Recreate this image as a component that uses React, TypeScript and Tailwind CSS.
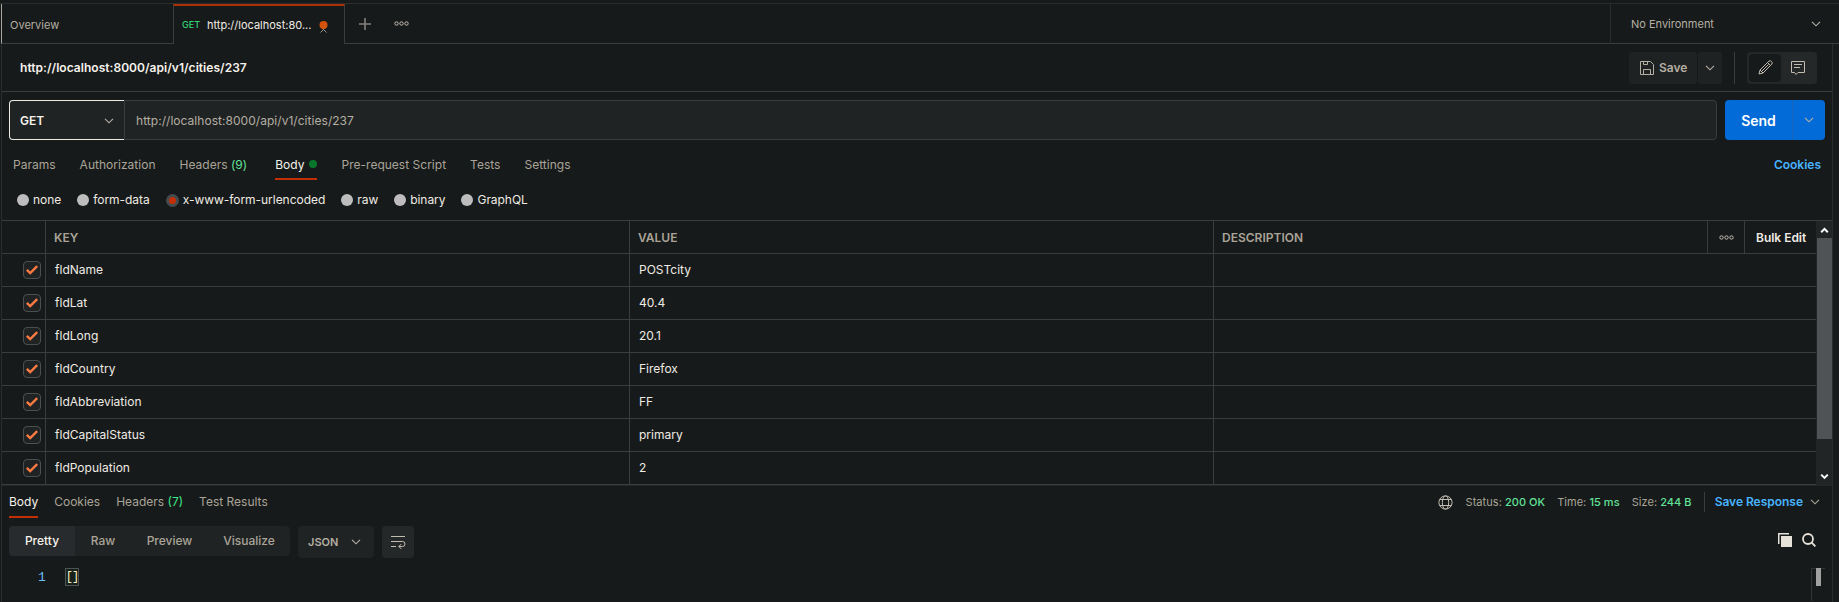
import React from "react";

const cities: [string, string][] = [
  ["fldName", "POSTcity"],
  ["fldLat", "40.4"],
  ["fldLong", "20.1"],
  ["fldCountry", "Firefox"],
  ["fldAbbreviation", "FF"],
  ["fldCapitalStatus", "primary"],
  ["fldPopulation", "2"],
];

function Chevron({ className = "" }: { className?: string }) {
  return (
    <svg width="10" height="6" viewBox="0 0 10 6" fill="none" stroke="currentColor" strokeWidth="1.15" className={className}>
      <path d="M1 0.8 L5 4.8 L9 0.8" />
    </svg>
  );
}

function Dots() {
  return (
    <svg width="15" height="5" viewBox="0 0 15 5" fill="none" stroke="currentColor" className="text-[#c2bbaf]">
      <circle cx="2.5" cy="2.5" r="1.7" />
      <circle cx="7.5" cy="2.5" r="1.7" />
      <circle cx="12.5" cy="2.5" r="1.7" />
    </svg>
  );
}

function TabBar() {
  return (
    <div className="flex h-10 text-[11px]">
      <div className="flex w-[172px] items-center border-b border-l border-[#393d3d] border-l-[#a9a69c] pt-[3px] pl-2 text-[#b5aea2]">
        Overview
      </div>
      <div className="flex w-[172px] items-center border-x border-[#393d3d] border-t-2 border-t-[#ad2f06] pl-2">
        <span className="w-[25px] text-[9px] font-medium text-[#32d476]">GET</span>
        <span className="w-[112px] whitespace-nowrap text-[#efebe4]">http://localhost:80...</span>
        <svg width="9" height="12" viewBox="0 0 9 12" className="mt-[3px]">
          <path d="M1.5 11.5 L6.5 6.5 M7.5 11.5 L2.5 6.5" stroke="#9c978d" />
          <circle cx="4.5" cy="4.1" r="4" fill="#d3540a" />
        </svg>
      </div>
      <div className="flex flex-1 items-center border-b border-[#393d3d] pl-[14px]">
        <svg width="12" height="12" viewBox="0 0 12 12" stroke="#85817a" strokeWidth="1.6">
          <path d="M6 0 V12 M0 6 H12" />
        </svg>
        <span className="ml-[23px]"><Dots /></span>
      </div>
      <div className="flex w-[229px] items-center justify-between border-b border-l border-[#393d3d] border-l-[#292d2e] pr-[18px] pl-5 text-[#b5aea2]">
        <span className="pt-px">No Environment</span>
        <Chevron />
      </div>
    </div>
  );
}

function TitleBar() {
  return (
    <div className="flex h-12 items-center border-b border-[#393d3d] pr-[15px] pl-[18px]">
      <h1 className="flex-1 text-[12px] font-semibold tracking-[0.04px] text-[#f6f2ec]">http://localhost:8000/api/v1/cities/237</h1>
      <button className="flex h-8 w-[68px] items-center gap-[5px] rounded-[3px] bg-[#1e2223] pl-[11px] text-[12px] font-semibold text-[#b5aea2]">
        <svg width="14" height="14" viewBox="0 0 14 14" fill="none" stroke="currentColor">
          <path d="M0.5 0.5 H10.5 L13.5 3.5 V13.5 H0.5 Z M3.5 0.5 V3.5 H7.5 V0.5 M3.5 13.5 V8.5 H10.5 V13.5" />
        </svg>
        Save
      </button>
      <button className="ml-px flex h-8 w-6 items-center justify-center rounded-[3px] bg-[#1e2223] text-[#b5aea2]">
        <Chevron />
      </button>
      <div className="ml-3 h-8 w-px bg-[#393d3d]" />
      <div className="ml-3 flex h-8 w-[70px] rounded bg-[#242829] p-0.5 text-[#c2bbaf]">
        <div className="flex w-8 items-center justify-center rounded bg-[#161a1a]">
          <svg width="15" height="15" viewBox="0 0 15 15" fill="none" stroke="currentColor">
            <path d="M1 14 L2 10 L10.8 1.2 Q12.3 0.2 13.5 1.5 Q14.8 2.7 13.8 4.2 L5 13 Z M9.5 2.5 L12.5 5.5 M2 10 L5 13 M4 11 L10.5 4.5" />
          </svg>
        </div>
        <div className="flex flex-1 items-center justify-center">
          <svg width="14" height="14" viewBox="0 0 14 14" fill="none" stroke="currentColor">
            <path d="M0.5 0.5 H13.5 V11.5 H7 L5 13.5 L3.5 11.5 H0.5 Z M3 3.5 H11 M3 6.5 H9" />
          </svg>
        </div>
      </div>
    </div>
  );
}

function UrlBar() {
  return (
    <div className="flex gap-2 pt-2 pr-[7px] pl-[7px]">
      <div className="flex h-10 flex-1 text-[12px]">
        <div className="flex w-[115px] items-center justify-between rounded-l border border-r-0 border-[#edeae4] bg-[#1f2324] pt-px pr-[10px] pl-[10px] font-semibold text-[#f6f2ec]">
          GET
          <Chevron className="text-[#b5aea2]" />
        </div>
        <div className="flex flex-1 items-center rounded-r border border-[#393d3d] bg-[#1f2324] pt-px pl-[11px] tracking-[0.04px] text-[#b5aea2]">
          http://localhost:8000/api/v1/cities/237
        </div>
      </div>
      <button className="flex h-10 w-[100px] rounded bg-[#036bd7]">
        <span className="flex h-10 w-[68px] items-center justify-center border-r border-[#1c64b5] pt-px text-[14px] font-semibold text-white">
          Send
        </span>
        <span className="flex h-10 flex-1 items-center justify-center text-[#b5aea2]"><Chevron /></span>
      </button>
    </div>
  );
}

function RequestTabs() {
  return (
    <div className="flex h-10 pr-[11px] pl-[11px] text-[12px] text-[#aaa498]">
      <div className="flex flex-1 gap-6 tracking-[0.015px]">
        <span className="pt-4">Params</span>
        <span className="pt-4">Authorization</span>
        <span className="mr-1 pt-4">Headers <span className="text-[#62e298]">(9)</span></span>
        <span className="flex h-10 gap-[5px] border-b-2 border-[#c22f05] pt-4 text-[#f6f2ec]">
          Body
          <i className="mt-[4px] size-2 rounded-full bg-[#08762b]" />
        </span>
        <span className="pt-4">Pre-request Script</span>
        <span className="pt-4">Tests</span>
        <span className="pt-4">Settings</span>
      </div>
      <span className="pt-4 font-semibold text-[#48b3ff]">Cookies</span>
    </div>
  );
}

function Radio({ label, active = false }: { label: string; active?: boolean }) {
  return (
    <label className="flex items-center gap-1">
      {active ? (
        <span className="flex size-[13px] items-center justify-center rounded-full bg-[#444b4f]">
          <span className="size-[7px] rounded-full bg-[#c22f05]" />
        </span>
      ) : (
        <span className="size-3 rounded-full bg-[#bdbdbd]" />
      )}
      {label}
    </label>
  );
}

function BodyTypes() {
  return (
    <div className="flex h-10 items-center gap-4 pl-[15px] text-[12px] tracking-[-0.04px] text-[#efebe4]">
      <Radio label="none" />
      <Radio label="form-data" />
      <Radio label="x-www-form-urlencoded" active />
      <Radio label="raw" />
      <Radio label="binary" />
      <Radio label="GraphQL" />
    </div>
  );
}

function Table() {
  return (
    <div className="flex h-[265px] border-t border-[#393d3d]">
      <div className="flex-1">
        <div className="flex h-[33px] items-center border-b border-[#393d3d] text-[12px] font-semibold text-[#aaa498]">
          <div className="h-full w-11 border-r border-[#393d3d]" />
          <div className="flex h-full w-[584px] items-center border-r border-[#393d3d] pt-px pl-2">KEY</div>
          <div className="flex h-full w-[584px] items-center border-r border-[#393d3d] pt-px pl-2">VALUE</div>
          <div className="flex h-full flex-1 items-center border-r border-[#393d3d] pt-px pl-2">DESCRIPTION</div>
          <div className="flex h-full w-[37px] items-center justify-center border-r border-[#393d3d]"><Dots /></div>
          <div className="flex h-full w-[71px] items-center pt-px pl-[11px] tracking-[-0.02px] text-[#f0ece5]">Bulk Edit</div>
        </div>
        {cities.map(([key, value]) => (
          <div key={key} className="flex h-[33px] border-b border-[#393d3d] text-[12px] text-[#efebe4]">
            <div className="flex w-11 items-center border-r border-[#393d3d] pl-[21px]">
              <div className="flex size-[18px] items-center justify-center rounded border border-[#4a4f50] bg-[#1f2324]">
                <svg width="12" height="10" viewBox="0 0 12 10" fill="none" stroke="#ff7b42" strokeWidth="2.4">
                  <path d="M0.8 4.8 L4.2 8 L11.2 1.2" />
                </svg>
              </div>
            </div>
            <div className="flex w-[584px] items-center border-r border-[#393d3d] pl-[9px] tracking-[0.02px]">{key}</div>
            <div className="flex w-[584px] items-center border-r border-[#393d3d] pl-[9px]">{value}</div>
            <div className="flex-1" />
          </div>
        ))}
      </div>
      <div className="flex w-4 flex-col items-center bg-[#222526] text-white">
        <svg width="9" height="17" viewBox="0 0 9 17" fill="none" stroke="currentColor" strokeWidth="2">
          <path d="M1.2 11.2 L4.5 7.9 L7.8 11.2" />
        </svg>
        <div className="h-[201px] w-[15px] self-end bg-[#505356]" />
        <div className="flex-1" />
        <svg width="9" height="17" viewBox="0 0 9 17" fill="none" stroke="currentColor" strokeWidth="2">
          <path d="M1.2 6.6 L4.5 9.9 L7.8 6.6" />
        </svg>
      </div>
    </div>
  );
}

function Metric({ label, value }: { label: string; value: string }) {
  return (
    <span className="mr-3 tracking-[0.04px]">
      {label}: <span className="font-medium text-[#62e298]">{value}</span>
    </span>
  );
}

function ResponseTabs() {
  return (
    <div className="flex h-[33px] border-t border-[#24282a] pr-[12px] pl-[7px] text-[12px] text-[#aaa498]">
      <div className="flex flex-1 gap-4">
        <span className="h-8 border-b-2 border-[#c22f05] pt-[7px] text-[#f6f2ec]">Body</span>
        <span className="pt-[7px]">Cookies</span>
        <span className="pt-[7px]">Headers <span className="text-[#3de989]">(7)</span></span>
        <span className="pt-[7px]">Test Results</span>
      </div>
      <div className="flex items-center text-[11px]">
        <svg width="15" height="15" viewBox="0 0 15 15" fill="none" stroke="#c2bbaf" className="mr-[13px]">
          <circle cx="7.5" cy="7.5" r="6.6" />
          <ellipse cx="7.5" cy="7.5" rx="3.2" ry="6.6" />
          <path d="M1.5 4.5 H13.5 M1.5 10.5 H13.5" />
        </svg>
        <Metric label="Status" value="200 OK" />
        <Metric label="Time" value="15 ms" />
        <Metric label="Size" value="244 B" />
        <div className="mr-[10px] h-5 w-px bg-[#393d3d]" />
        <span className="mr-[7px] text-[12px] font-semibold tracking-[-0.02px] text-[#48b3ff]">Save Response</span>
        <Chevron />
      </div>
    </div>
  );
}

function ViewBar() {
  return (
    <div className="flex h-[40px] items-start pt-2 pr-[16px] pl-[7px] text-[12px] font-medium text-[#aaa498]">
      <div className="flex h-[30px] rounded bg-[#1f2324]">
        <span className="flex w-[66px] items-center justify-center rounded-l bg-[#272b2d] text-[#f6f2ec]">Pretty</span>
        <span className="flex w-[56px] items-center justify-center">Raw</span>
        <span className="flex w-[77px] items-center justify-center">Preview</span>
        <span className="flex w-[82px] items-center justify-center">Visualize</span>
      </div>
      <div className="ml-2 flex h-8 w-[76px] items-center justify-between rounded bg-[#1f2324] pr-[13px] pl-[10px] text-[11px] font-semibold text-[#b5aea2]">
        JSON <Chevron />
      </div>
      <div className="ml-2 flex h-8 w-8 items-center justify-center rounded bg-[#242829]">
        <svg width="15" height="14" viewBox="0 0 15 14" fill="none" stroke="#c2bbaf">
          <path d="M0 1.5 H14 M0 6.5 H11.5 Q14 6.5 14 9 Q14 11.5 11.5 11.5 H8 M0 11.5 H5 M10.3 9 L7.8 11.5 L10.3 14" />
        </svg>
      </div>
      <div className="flex-1" />
      <svg width="14" height="14" viewBox="0 0 14 14" className="mt-[7px]">
        <path d="M0 0 H11 V1.5 H1.5 V11 H0 Z M3 3 H14 V14 H3 Z" fill="#e6e1d9" />
      </svg>
      <svg width="14" height="14" viewBox="0 0 14 14" fill="none" stroke="#e6e1d9" strokeWidth="1.8" className="mt-[7px] ml-[10px]">
        <circle cx="6" cy="6" r="5" />
        <path d="M9.7 9.7 L13.4 13.4" />
      </svg>
    </div>
  );
}

function Editor() {
  return (
    <div className="mt-[10px] flex h-[33px] pl-[36px] font-['Liberation_Mono',monospace] text-[12px]">
      <span className="w-[27px] text-[13px] text-[#6cc0f5]">1</span>
      <span className="flex h-[18px] w-[14px] items-center justify-center border border-[#4e5252] bg-[#17221b] tracking-[-1px] text-[#fff3c4]">[]</span>
      <div className="flex-1" />
      <div className="mr-[7px] flex w-[14px] border-t border-l border-[#303434] pl-1">
        <div className="-mt-px h-[18px] w-[5px] bg-[#a0a0a0]" />
      </div>
    </div>
  );
}

export default function App() {
  return (
    <div className="h-[602px] w-[1839px] overflow-hidden bg-[#161a1a] pt-[3px] font-['Inter',sans-serif]">
      <div className="border-t border-[#292d2e] pl-px">
        <TabBar />
      </div>
      <div className="ml-px h-[558px] w-[1832px] border-x border-[#292d2e]">
        <TitleBar />
        <UrlBar />
        <RequestTabs />
        <BodyTypes />
        <Table />
        <ResponseTabs />
        <ViewBar />
        <Editor />
      </div>
    </div>
  );
}
